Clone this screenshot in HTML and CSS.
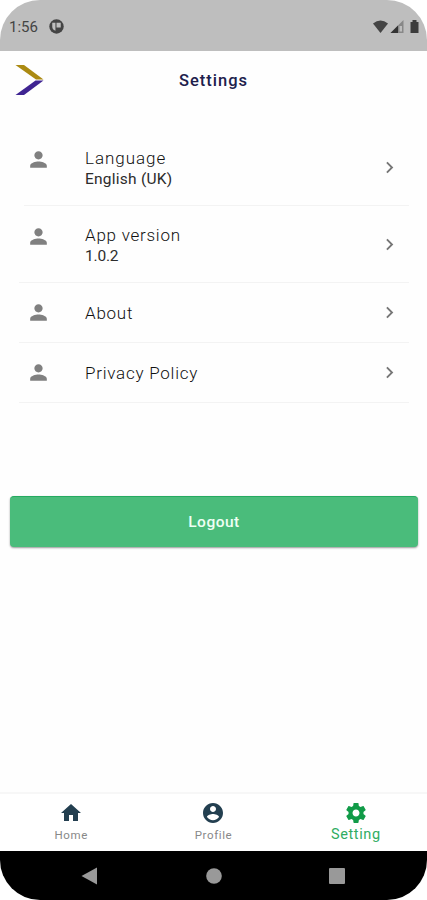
FILE: index.html
```html
<!DOCTYPE html>
<html lang="en">
<head>
<meta charset="utf-8">
<title>Settings</title>
<link rel="stylesheet" href="styles.css">
</head>
<body>
<svg class="defs" width="0" height="0">
  <symbol id="person" viewBox="0 0 24 24"><path d="M12 12c2.21 0 4-1.79 4-4s-1.79-4-4-4-4 1.79-4 4 1.790 4 4 4zm0 2c-2.670 0-8 1.340-8 4v2h16v-2c0-2.660-5.330-4-8-4z"/></symbol>
  <symbol id="chevron" viewBox="0 0 24 24"><path d="M10 6 8.590 7.410 13.170 12l-4.580 4.590L10 18l6-6z"/></symbol>
</svg>
<div class="phone">
  <div class="status">
    <span class="time">1:56</span>
    <svg class="app-dot" viewBox="0 0 16 16"><circle cx="8" cy="8" r="6.800" fill="#444"/><path fill="#bebebe" d="M4 4.500h3v7.500Q4 11 4 8zM8 4.500h4v4.500H8z"/></svg>
    <svg class="signals" viewBox="0 0 48 16"><path fill="#444" d="M0 4.500Q7.500-1.500 15 4.500L7.500 14z"/><path fill="#888" d="M17.500 14 30.500 1v13z"/><path fill="#333" d="M17.500 14 25 6.500V14z"/><path fill="#bebebe" d="M26.500 7H29v5.500h-2.500z"/><path fill="#3c3c3c" d="M37.500 3h2V1h4v2h2v11h-8z"/></svg>
  </div>
  <header class="header">
    <svg class="logo" viewBox="0 0 30 32"><path fill="#ab8a12" d="M.5 1H9l19.500 14.500H21z"/><path fill="#3f2492" d="M20.500 16.500h8L9 31H.5z"/></svg>
    <h1 class="title">Settings</h1>
  </header>
  <main class="list">
    <div class="row tall first"><svg class="person"><use href="#person"/></svg><div class="copy"><div class="name language">Language</div><div class="detail">English (UK)</div></div><svg class="chevron"><use href="#chevron"/></svg></div>
    <div class="row tall"><svg class="person"><use href="#person"/></svg><div class="copy"><div class="name">App version</div><div class="detail version">1.0.2</div></div><svg class="chevron"><use href="#chevron"/></svg></div>
    <div class="row"><svg class="person"><use href="#person"/></svg><div class="copy"><div class="name">About</div></div><svg class="chevron"><use href="#chevron"/></svg></div>
    <div class="row"><svg class="person"><use href="#person"/></svg><div class="copy"><div class="name">Privacy Policy</div></div><svg class="chevron"><use href="#chevron"/></svg></div>
  </main>
  <button class="logout">Logout</button>
  <nav class="tabs">
    <div class="tab"><svg viewBox="0 0 24 24"><path d="M10 20v-6h4v6h5v-8h3L12 3 2 12h3v8z"/></svg><span>Home</span></div>
    <div class="tab"><svg viewBox="0 0 24 24"><path d="M12 2C6.480 2 2 6.480 2 12s4.480 10 10 10 10-4.480 10-10S17.520 2 12 2zm0 3c1.660 0 3 1.340 3 3s-1.340 3-3 3-3-1.340-3-3 1.340-3 3-3zm0 14.200c-2.500 0-4.710-1.280-6-3.220.03-1.990 4-3.080 6-3.080s5.970 1.090 6 3.080c-1.290 1.940-3.500 3.220-6 3.220z"/></svg><span>Profile</span></div>
    <div class="tab active"><svg viewBox="0 0 24 24"><path d="M19.430 12.980c.04-.32.070-.64.070-.98s-.03-.66-.07-.98l2.110-1.650c.19-.15.240-.42.120-.64l-2-3.460c-.12-.22-.39-.3-.61-.22l-2.490 1c-.52-.4-1.080-.73-1.690-.98l-.38-2.650C14.460 2.180 14.250 2 14 2h-4c-.25 0-.46.180-.49.420l-.38 2.650c-.61.250-1.170.59-1.690.98l-2.490-1c-.23-.09-.49 0-.61.220l-2 3.460c-.13.220-.07.490.12.640l2.110 1.650c-.04.320-.07.650-.07.980s.03.660.070.980l-2.110 1.650c-.19.150-.24.420-.12.640l2 3.460c.12.220.39.300.61.220l2.490-1c.52.400 1.080.730 1.690.980l.38 2.650c.03.240.24.420.49.420h4c.25 0 .46-.18.490-.42l.38-2.650c.61-.25 1.170-.59 1.690-.98l2.490 1c.23.090.49 0 .61-.22l2-3.460c.12-.22.070-.49-.12-.64l-2.110-1.650zM12 15.500c-1.930 0-3.500-1.570-3.500-3.500s1.570-3.500 3.500-3.500 3.500 1.570 3.500 3.500-1.570 3.500-3.500 3.500z"/></svg><span>Setting</span></div>
  </nav>
  <div class="system">
    <svg viewBox="0 0 20 20"><path d="M1.500 10 17 1.500v17z"/></svg>
    <svg viewBox="0 0 20 20"><circle cx="10" cy="10" r="7.800"/></svg>
    <svg viewBox="0 0 20 20"><rect x="2" y="2" width="16" height="16" rx="1"/></svg>
  </div>
</div>
</body>
</html>
```

FILE: styles.css
```css
* { box-sizing: border-box; }
body { margin: 0; background: #fff; font-family: Roboto, "Liberation Sans", sans-serif; }
.defs { display: block; }
.phone { width: 427px; height: 900px; display: flex; flex-direction: column; overflow: hidden; border-radius: 40px; background: #fefefe; }
.status { height: 51px; flex: none; background: #bebebe; display: flex; align-items: center; padding: 2px 6px 0 9px; color: #444; }
.time { font-size: 15px; width: 39px; white-space: nowrap; }
.app-dot { width: 17px; height: 17px; }
.signals { width: 48px; height: 16px; margin-left: auto; }
.header { height: 78px; flex: none; display: grid; grid-template-columns: 45px 1fr 45px; align-items: start; padding-top: 13px; }
.logo { width: 30px; height: 32px; margin-left: 15px; }
.title { margin: 7px 0 0; text-align: center; font-size: 16.500px; line-height: 20px; font-weight: 500; letter-spacing: 1px; color: #20204c; }
.list { flex: none; margin: 0 18px 0 19px; }
.row { height: 60px; border-bottom: 1px solid #f3f3f3; display: flex; align-items: center; padding: 0 8px 0 7px; }
.row.tall { height: 77px; }
.row.first { margin-left: 5px; padding-left: 2px; }
.person { width: 25px; height: 25px; fill: #808080; flex: none; }
.tall .person { margin-bottom: 16px; }
.copy { flex: 1; padding-left: 34px; }
.tall .copy { padding-top: 2px; }
.name { font-size: 17px; line-height: 22px; font-weight: 300; letter-spacing: .75px; color: #111; }
.name.language { letter-spacing: .95px; }
.detail { font-size: 15.500px; line-height: 21px; font-weight: 400; letter-spacing: .25px; color: #2c2c2c; }
.detail.version { letter-spacing: -.2px; }
.chevron { width: 23px; height: 23px; fill: #777; flex: none; }
.logout { width: 408px; height: 51px; flex: none; margin: 93px 0 0 10px; border: 0; border-top: 1px solid #25aa60; border-radius: 4px; background: #4abc7b; color: #effff4; font: 500 15.500px Roboto, sans-serif; letter-spacing: .5px; box-shadow: 0 1px 2px #999; }
.tabs { height: 59px; flex: none; margin-top: auto; border-top: 2px solid #f7f7f7; display: grid; grid-template-columns: repeat(3, 1fr); background: #fff; }
.tab { display: flex; flex-direction: column; align-items: center; padding-top: 7px; font-size: 11.500px; line-height: 16px; letter-spacing: .6px; color: #888; }
.tab svg { width: 24px; height: 24px; fill: #233f50; margin-bottom: 2px; }
.tab.active { color: #2fac62; font-size: 14.500px; }
.tab.active svg { fill: #119b48; }
.system { height: 49px; flex: none; background: #000; display: flex; justify-content: space-between; align-items: center; padding: 0 80px 0 80px; }
.system svg { width: 20px; height: 20px; fill: #999; }
```
